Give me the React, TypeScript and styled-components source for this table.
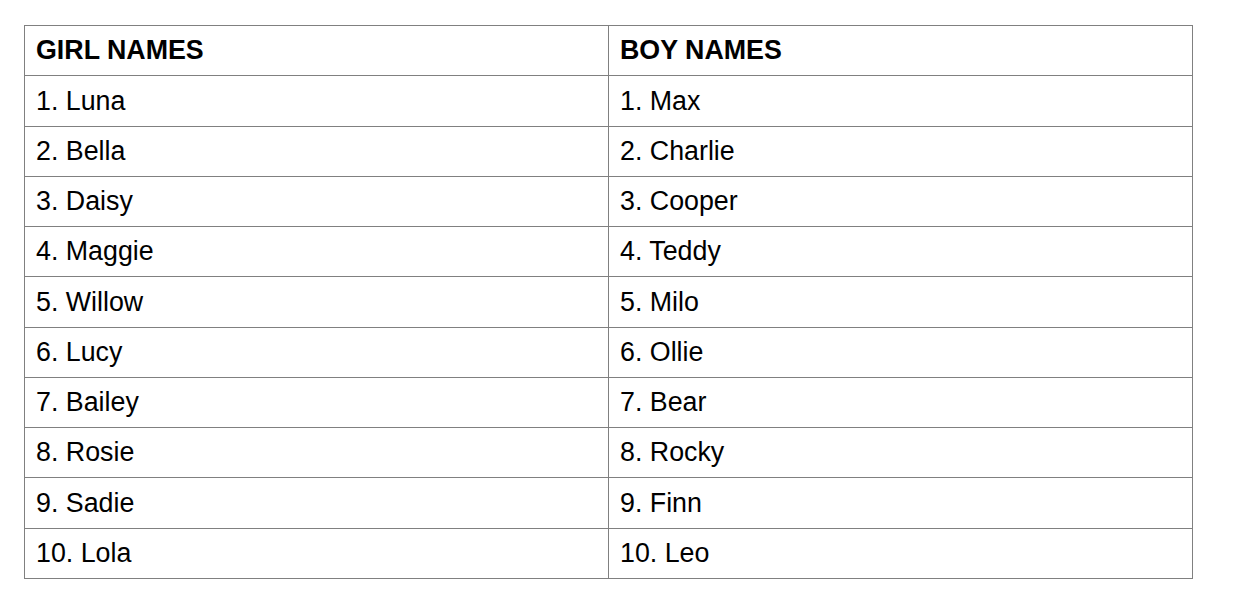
import React from "react";
import styled, { createGlobalStyle } from "styled-components";

const GlobalStyle = createGlobalStyle`
  html, body {
    margin: 0;
    padding: 0;
    background: #ffffff;
  }
  body {
    font-family: "Liberation Sans", Arial, Helvetica, sans-serif;
    color: #000000;
  }
`;

const Page = styled.div`
  padding: 25px 0 0 24px;
`;

const NamesTable = styled.table`
  border-collapse: collapse;
  width: 1169px;
  table-layout: fixed;
`;

const Cell = styled.td<{ $head?: boolean }>`
  border: 1px solid #808080;
  height: 49.27px;
  padding: 0 0 0 11px;
  font-size: 26.8px;
  font-weight: ${(p) => (p.$head ? 700 : 400)};
  vertical-align: middle;
  line-height: 1;
  white-space: nowrap;
`;

const girls = ["Luna", "Bella", "Daisy", "Maggie", "Willow", "Lucy", "Bailey", "Rosie", "Sadie", "Lola"];
const boys = ["Max", "Charlie", "Cooper", "Teddy", "Milo", "Ollie", "Bear", "Rocky", "Finn", "Leo"];

export default function App() {
  return (
    <>
      <GlobalStyle />
      <Page>
        <NamesTable>
          <tbody>
            <tr>
              <Cell $head>GIRL NAMES</Cell>
              <Cell $head>BOY NAMES</Cell>
            </tr>
            {girls.map((g, i) => (
              <tr key={g}>
                <Cell>{i + 1}. {g}</Cell>
                <Cell>{i + 1}. {boys[i]}</Cell>
              </tr>
            ))}
          </tbody>
        </NamesTable>
      </Page>
    </>
  );
}
